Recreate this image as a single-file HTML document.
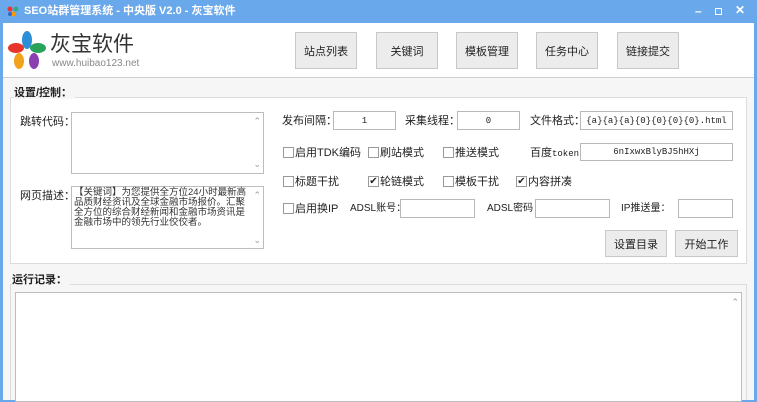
<!DOCTYPE html>
<html><head><meta charset="utf-8"><style>
*{margin:0;padding:0;box-sizing:border-box}
body{width:757px;height:400px;overflow:hidden;background:#6aa8ec;font-family:"Liberation Sans","Noto Sans CJK SC",sans-serif;font-size:11px;color:#222;position:relative}
.a{position:absolute}
#win{position:absolute;left:3px;top:23px;width:751px;height:377px;background:#f6f6f6}
.t{position:absolute;white-space:nowrap;font-size:11px;line-height:12px}
.btn{position:absolute;background:#ececec;border:1px solid #c8c8c8;font-size:11px;display:flex;align-items:center;justify-content:center;color:#222}
.in{position:absolute;background:#fff;border:1px solid #b8b8b8;font-family:"Liberation Mono","Noto Sans CJK SC",monospace;font-size:9px;display:flex;align-items:center;justify-content:center}
.cb{position:absolute;width:11px;height:11px;border:1px solid #9a9a9a;background:#fff;font-size:10px;line-height:9px;text-align:center}
.ta{position:absolute;background:#fff;border:1px solid #bdbdbd}
.sc{position:absolute;right:2px;color:#999;font-size:9px}
</style></head><body>
<div class="a" style="left:7px;top:5px;width:12px;height:12px">
<svg width="12" height="12"><circle cx="3" cy="4" r="2.5" fill="#e33"/><circle cx="9" cy="4" r="2.5" fill="#3a8"/><circle cx="6" cy="9" r="2.5" fill="#f90"/><circle cx="3" cy="9" r="2" fill="#36c"/></svg></div>
<div class="t" style="left:24px;top:5px;color:#fff;font-weight:bold;font-size:11px">SEO站群管理系统 - 中央版 V2.0 - 灰宝软件</div>
<div class="t" style="left:695px;top:5px;color:#fff;font-size:12px;font-weight:bold">–</div>
<div class="a" style="left:715px;top:8px;width:7px;height:7px;border:1.5px solid #fff"></div>
<div class="t" style="left:735px;top:4px;color:#fff;font-size:12px;font-weight:bold">✕</div>
<div id="win">
<div class="a" style="left:0;top:0;width:751px;height:55px;background:#fff;border-bottom:1px solid #cfcfcf"></div>
</div>
<svg class="a" style="left:8px;top:31px" width="38" height="38" viewBox="0 0 38 38">
<ellipse cx="19" cy="9" rx="5" ry="9" fill="#2a8fd6"/>
<ellipse cx="30" cy="17" rx="8" ry="5" fill="#2aa35a"/>
<ellipse cx="26" cy="30" rx="5" ry="8" fill="#8b3fb0"/>
<ellipse cx="11" cy="30" rx="5" ry="8" fill="#f2a21c"/>
<ellipse cx="8" cy="17" rx="8" ry="5" fill="#e8352b"/>
</svg>
<div class="t" style="left:50px;top:34px;font-size:21px;line-height:22px;color:#333">灰宝软件</div>
<div class="t" style="left:52px;top:58px;font-size:10px;color:#888">www.huibao123.net</div>
<div class="btn" style="left:295px;top:32px;width:62px;height:37px">站点列表</div>
<div class="btn" style="left:376px;top:32px;width:62px;height:37px">关键词</div>
<div class="btn" style="left:456px;top:32px;width:62px;height:37px">模板管理</div>
<div class="btn" style="left:536px;top:32px;width:62px;height:37px">任务中心</div>
<div class="btn" style="left:617px;top:32px;width:62px;height:37px">链接提交</div>

<div class="a" style="left:10px;top:97px;width:737px;height:167px;background:#fff;border:1px solid #dcdcdc"></div>
<div class="t" style="left:14px;top:87px;font-weight:bold;background:#f6f6f6;padding-right:3px">设置/控制：</div>
<div class="t" style="left:20px;top:116px">跳转代码：</div>
<div class="ta" style="left:71px;top:112px;width:193px;height:62px"><span class="sc" style="top:3px">⌃</span><span class="sc" style="bottom:3px">⌄</span></div>
<div class="t" style="left:20px;top:190px">网页描述：</div>
<div class="ta" style="left:71px;top:186px;width:193px;height:63px;font-size:9.5px;line-height:10px;padding:1px 16px 0 2px;color:#333">【关键词】为您提供全方位24小时最新高品质财经资讯及全球金融市场报价。汇聚全方位的综合财经新闻和金融市场资讯是金融市场中的领先行业佼佼者。<span class="sc" style="top:3px">⌃</span><span class="sc" style="bottom:3px">⌄</span></div>

<div class="t" style="left:282px;top:115px">发布间隔：</div>
<div class="in" style="left:333px;top:111px;width:63px;height:19px">1</div>
<div class="t" style="left:405px;top:115px">采集线程：</div>
<div class="in" style="left:457px;top:111px;width:63px;height:19px">0</div>
<div class="t" style="left:530px;top:115px">文件格式：</div>
<div class="in" style="left:580px;top:111px;width:153px;height:19px">{a}{a}{a}{0}{0}{0}{0}.html</div>

<div class="cb" style="left:283px;top:147px"></div><div class="t" style="left:295px;top:147px">启用TDK编码</div>
<div class="cb" style="left:368px;top:147px"></div><div class="t" style="left:380px;top:147px">刷站模式</div>
<div class="cb" style="left:443px;top:147px"></div><div class="t" style="left:455px;top:147px">推送模式</div>
<div class="t" style="left:530px;top:147px">百度<span style="font-family:'Liberation Mono',monospace;font-size:9px">token</span>：</div>
<div class="in" style="left:580px;top:143px;width:153px;height:18px">6nIxwxBlyBJ5hHXj</div>

<div class="cb" style="left:283px;top:176px"></div><div class="t" style="left:295px;top:176px">标题干扰</div>
<div class="cb" style="left:368px;top:176px">✔</div><div class="t" style="left:380px;top:176px">轮链模式</div>
<div class="cb" style="left:443px;top:176px"></div><div class="t" style="left:455px;top:176px">模板干扰</div>
<div class="cb" style="left:516px;top:176px">✔</div><div class="t" style="left:528px;top:176px">内容拼凑</div>

<div class="cb" style="left:283px;top:203px"></div><div class="t" style="left:295px;top:203px">启用换IP</div>
<div class="t" style="left:350px;top:203px;font-size:10px">ADSL账号：</div>
<div class="in" style="left:400px;top:199px;width:75px;height:19px"></div>
<div class="t" style="left:487px;top:203px;font-size:10px">ADSL密码：</div>
<div class="in" style="left:535px;top:199px;width:75px;height:19px"></div>
<div class="t" style="left:621px;top:203px;font-size:10px">IP推送量：</div>
<div class="in" style="left:678px;top:199px;width:55px;height:19px"></div>

<div class="btn" style="left:605px;top:230px;width:62px;height:27px">设置目录</div>
<div class="btn" style="left:675px;top:230px;width:63px;height:27px">开始工作</div>

<div class="a" style="left:10px;top:284px;width:737px;height:116px;border:1px solid #dcdcdc;border-bottom:none"></div>
<div class="t" style="left:12px;top:274px;font-weight:bold;background:#f6f6f6;padding-right:3px">运行记录：</div>
<div class="ta" style="left:15px;top:292px;width:727px;height:110px"><span class="sc" style="top:4px">⌃</span></div>
</body></html>
